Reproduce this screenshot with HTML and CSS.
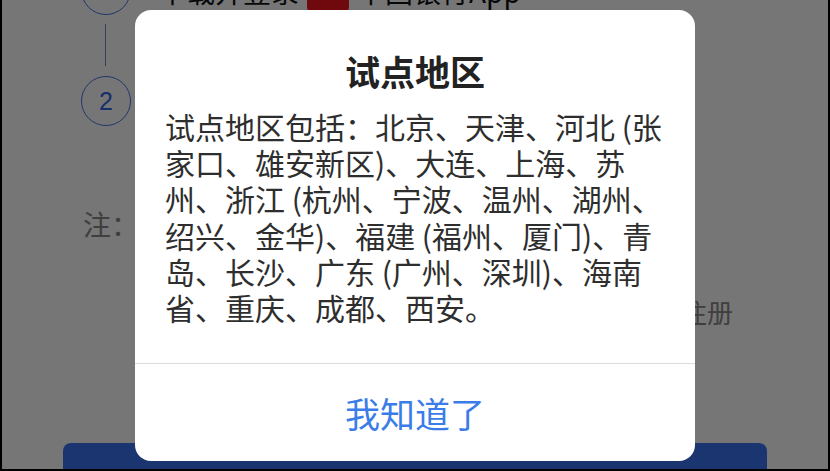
FILE: index.html
```html
<!DOCTYPE html>
<html lang="zh-CN">
<head>
<meta charset="utf-8">
<title>试点地区</title>
<link rel="stylesheet" href="styles.css">
</head>
<body>
<div class="screen">
  <div class="page">
    <div class="step step-first">
      <div class="step-num">1</div>
      <div class="step-text">下载并登录 <span class="app-icon"></span> 中国银行App</div>
    </div>
    <div class="connector"></div>
    <div class="step">
      <div class="step-num">2</div>
      <div class="step-text">登录后进入开户页面</div>
    </div>
    <div class="note">
      <div class="note-label">注：</div>
      <div class="note-body">
        <div class="note-line">仅支持试点地区用户在线办理</div>
        <div class="note-line">非试点地区用户请前往网点</div>
        <div class="note-line">完成身份验证后，即可返回当前页面并继续进行注册</div>
      </div>
    </div>
    <div class="cta">立即开户</div>
  </div>

  <div class="overlay">
    <div class="dialog">
      <div class="dialog-body">
        <h2 class="dialog-title">试点地区</h2>
        <p class="dialog-text">试点地区包括：北京、天津、河北 (张家口、雄安新区)、大连、上海、苏州、浙江 (杭州、宁波、温州、湖州、绍兴、金华)、福建 (福州、厦门)、青岛、长沙、广东 (广州、深圳)、海南省、重庆、成都、西安。</p>
      </div>
      <div class="dialog-action">我知道了</div>
    </div>
  </div>
</div>
</body>
</html>
```

FILE: styles.css
```css
html, body {
  margin: 0;
  padding: 0;
}

body {
  font-family: "Noto Sans CJK SC", "Noto Sans", sans-serif;
  background: #000;
}

.screen {
  position: relative;
  width: 830px;
  height: 471px;
  box-sizing: border-box;
  border: 2px solid #000;
  border-top: 0;
  overflow: hidden;
  background: #fff;
}

/* ---------- page under the mask ---------- */
.page {
  padding: 0 61px;
}

.step {
  display: flex;
  align-items: center;
  gap: 28px;
  padding-left: 18px;
  height: 50px;
}

.step-first {
  margin-top: -35px;
}

.step-num {
  flex: none;
  width: 50px;
  height: 50px;
  box-sizing: border-box;
  border: 1px solid #4a72e8;
  border-radius: 50%;
  display: flex;
  align-items: center;
  justify-content: center;
  font-size: 25px;
  color: #3466ec;
  font-family: "Liberation Sans", sans-serif;
}

.step-text {
  display: flex;
  align-items: center;
  gap: 8px;
  font-size: 28px;
  color: #111;
  white-space: nowrap;
  padding-top: 2px;
}

.app-icon {
  display: inline-block;
  width: 42px;
  height: 42px;
  margin-top: 10px;
  border-radius: 11px;
  background: #f2151d;
}

.connector {
  width: 0;
  height: 42px;
  margin: 9px 0 10px 42px;
  border-left: 1px solid #6f86c8;
}

.note {
  display: flex;
  margin-top: 76px;
  padding-left: 20px;
  font-size: 26px;
  line-height: 44px;
  color: #888;
}

.note-label {
  font-size: 28px;
  flex: none;
  width: 52px;
}

.note-line {
  white-space: nowrap;
}

.cta {
  margin-top: 109px;
  height: 90px;
  border-radius: 8px;
  background: #3874f1;
  color: #fff;
  font-size: 30px;
  display: flex;
  align-items: center;
  justify-content: center;
}

/* ---------- mask + dialog ---------- */
.overlay {
  position: absolute;
  inset: 0;
  background: rgba(0, 0, 0, 0.537);
  display: flex;
  justify-content: center;
  align-items: flex-start;
  padding-top: 10px;
}

.dialog {
  width: 560px;
  background: #fff;
  border-radius: 16px;
  overflow: hidden;
}

.dialog-body {
  padding: 40px 30px 38px;
}

.dialog-title {
  margin: 0 0 16px;
  font-size: 35px;
  line-height: 42px;
  font-weight: 700;
  text-align: center;
  color: #222;
}

.dialog-text {
  margin: 0;
  font-size: 30px;
  line-height: 36.2px;
  color: #2e2e2e;
}

.dialog-action {
  border-top: 1px solid #dcdcdc;
  height: 97px;
  display: flex;
  align-items: center;
  justify-content: center;
  font-size: 35px;
  color: #3a7ce8;
}
```
